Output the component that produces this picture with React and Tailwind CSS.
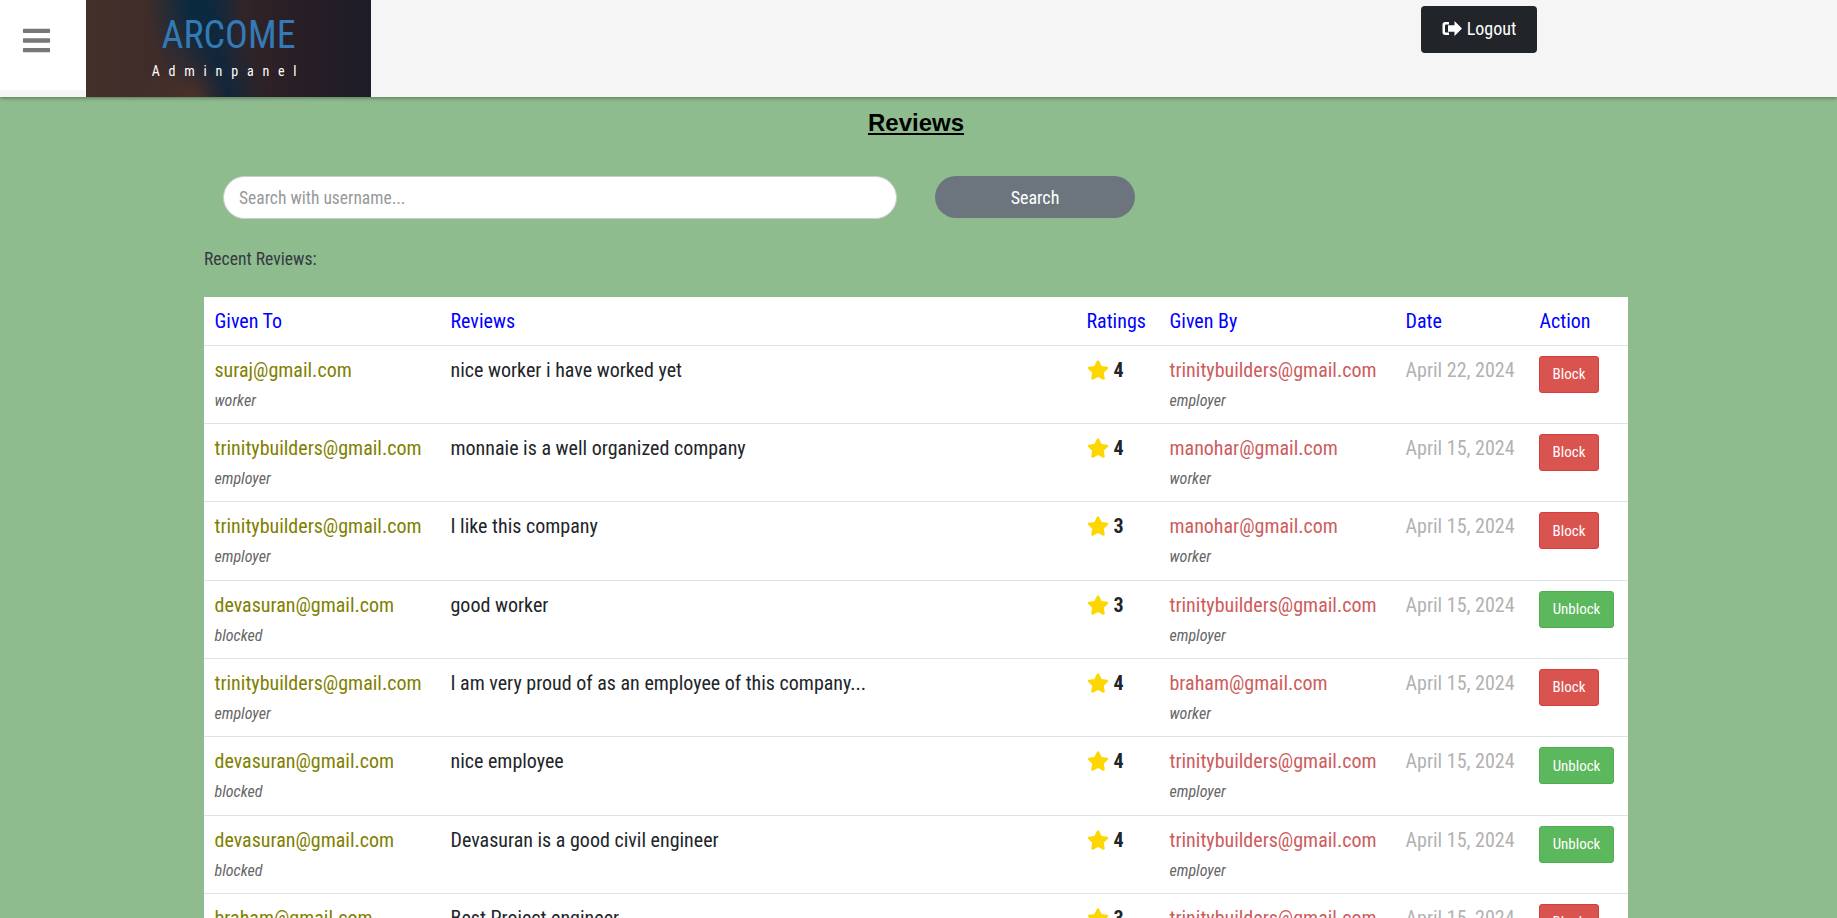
import { FaBars, FaStar } from "react-icons/fa";

const rows = [
  ["suraj@gmail.com", "worker", "nice worker i have worked yet", 4, "trinitybuilders@gmail.com", "employer", "April 22, 2024", "Block"],
  ["trinitybuilders@gmail.com", "employer", "monnaie is a well organized company", 4, "manohar@gmail.com", "worker", "April 15, 2024", "Block"],
  ["trinitybuilders@gmail.com", "employer", "I like this company", 3, "manohar@gmail.com", "worker", "April 15, 2024", "Block"],
  ["devasuran@gmail.com", "blocked", "good worker", 3, "trinitybuilders@gmail.com", "employer", "April 15, 2024", "Unblock"],
  ["trinitybuilders@gmail.com", "employer", "I am very proud of as an employee of this company...", 4, "braham@gmail.com", "worker", "April 15, 2024", "Block"],
  ["devasuran@gmail.com", "blocked", "nice employee", 4, "trinitybuilders@gmail.com", "employer", "April 15, 2024", "Unblock"],
  ["devasuran@gmail.com", "blocked", "Devasuran is a good civil engineer", 4, "trinitybuilders@gmail.com", "employer", "April 15, 2024", "Unblock"],
  ["braham@gmail.com", "worker", "Best Project engineer", 3, "trinitybuilders@gmail.com", "employer", "April 15, 2024", "Block"],
];

const headers = ["Given To", "Reviews", "Ratings", "Given By", "Date", "Action"];

function LogoutIcon() {
  return (
    <svg viewBox="0 0 20 15" className="h-[15px] w-[20px] fill-white">
      <path d="M7 1H3.2A2.7 2.7 0 0 0 .5 3.7v7.6A2.7 2.7 0 0 0 3.2 14H7v-2.5H4a1 1 0 0 1-1-1V4.5a1 1 0 0 1 1-1h3z" />
      <path d="M6 4.2h6.5V0L20 7.5 12.5 15v-4.2H6z" />
    </svg>
  );
}

function ReviewRow({ row }) {
  const [to, toRole, text, rating, by, byRole, date, action] = row;
  const blocked = action === "Unblock";
  return (
    <tr className="border-t border-[#dee2e6] align-top">
      <td className="px-[10.5px] pt-[9px] pb-[10.33px]">
        <div className="text-[20px] leading-[30px] text-[#808000]">{to}</div>
        <div className="mt-[4px] text-[16px] leading-[24px] italic text-[#666]">{toRole}</div>
      </td>
      <td className="px-[10.5px] pt-[9px] text-[20px] leading-[30px] text-[#212529]">{text}</td>
      <td className="px-[10.5px] pt-[9px]">
        <div className="flex items-center gap-[5px] text-[20px] leading-[30px] font-bold text-[#212529]">
          <FaStar className="text-[22px] text-[#ffd700]" />
          {rating}
        </div>
      </td>
      <td className="px-[10.5px] pt-[9px]">
        <div className="text-[20px] leading-[30px] text-[#cd5c5c]">{by}</div>
        <div className="mt-[4px] text-[16px] leading-[24px] italic text-[#666]">{byRole}</div>
      </td>
      <td className="px-[10.5px] pt-[9px] text-[20px] leading-[30px] text-[#b2b2b2]">{date}</td>
      <td className="px-[10px] pt-[10px]">
        <button
          className={
            blocked
              ? "h-[37px] w-[75px] rounded-[3px] border border-[#4cae4c] bg-[#5cb85c] text-[15px] text-white"
              : "h-[37px] w-[60px] rounded-[3px] border border-[#d43f3a] bg-[#d9534f] text-[15px] text-white"
          }
        >
          {action}
        </button>
      </td>
    </tr>
  );
}

export default function App() {
  return (
    <div className="h-[918px] overflow-hidden bg-[#8fbc8f] font-['Roboto_Condensed',Roboto,sans-serif] [font-stretch:75%]">
      <header className="relative flex h-[97px] bg-[#f5f5f5] shadow-[0_1px_4px_rgba(0,0,0,0.4)]">
        <div className="flex h-[90px] w-[86px] items-center justify-center bg-white pr-[14px] pb-[9px]">
          <FaBars className="text-[31px] text-[#777]" />
        </div>
        <div className="flex w-[285px] flex-col items-center bg-[#2a2026] bg-[radial-gradient(ellipse_48px_90px_at_38%_0%,#072a42,transparent),linear-gradient(75deg,transparent_36%,#12263a_46%,transparent_58%),radial-gradient(ellipse_50px_30px_at_36%_100%,#4a3029,transparent),linear-gradient(90deg,#43302a,#3e2b2a_35%,#2a1f26_70%,#1d1c28)]">
          <div className="mt-[13px] text-[38px] leading-[44px] text-[#337ab7]">ARCOME</div>
          <div className="mt-[4px] text-[14px] leading-[20px] tracking-[8.8px] text-white">Adminpanel</div>
        </div>
        <div className="flex flex-1 pl-[1050px] pt-[6px]">
          <button className="flex h-[47px] w-[116px] items-center justify-center gap-[5px] rounded-[4px] bg-[#212529] pb-[2px] text-[18px] text-white">
            <LogoutIcon />
            Logout
          </button>
        </div>
      </header>

      <h1 className="mt-[11px] pr-[5px] text-center font-['Liberation_Sans',sans-serif] text-[24px] leading-[29px] font-bold text-black underline">
        Reviews
      </h1>

      <div className="mr-[209px] ml-[204px]">
        <div className="mt-[39px] flex items-start pl-[19px]">
          <input
            placeholder="Search with username..."
            className="h-[43px] w-[674px] rounded-full border border-[#ccc] bg-white px-[15px] text-[17.5px] placeholder:text-[#999]"
          />
          <button className="ml-[38px] h-[42px] w-[200px] rounded-full bg-[#6c757d] text-[18px] text-white">Search</button>
        </div>

        <p className="mt-[27px] text-[17.6px] leading-[27px] text-[#343a40]">Recent Reviews:</p>

        <table className="mt-[24.3px] w-full table-fixed border-collapse bg-white">
          <colgroup>
            <col className="w-[236px]" />
            <col className="w-[636px]" />
            <col className="w-[83px]" />
            <col className="w-[236px]" />
            <col className="w-[134px]" />
            <col />
          </colgroup>
          <thead>
            <tr>
              {headers.map((h) => (
                <th key={h} className="h-[48px] px-[10.5px] text-left text-[20px] font-normal text-[#0000ff]">
                  {h}
                </th>
              ))}
            </tr>
          </thead>
          <tbody>
            {rows.map((row, i) => (
              <ReviewRow key={i} row={row} />
            ))}
          </tbody>
        </table>
      </div>
    </div>
  );
}
